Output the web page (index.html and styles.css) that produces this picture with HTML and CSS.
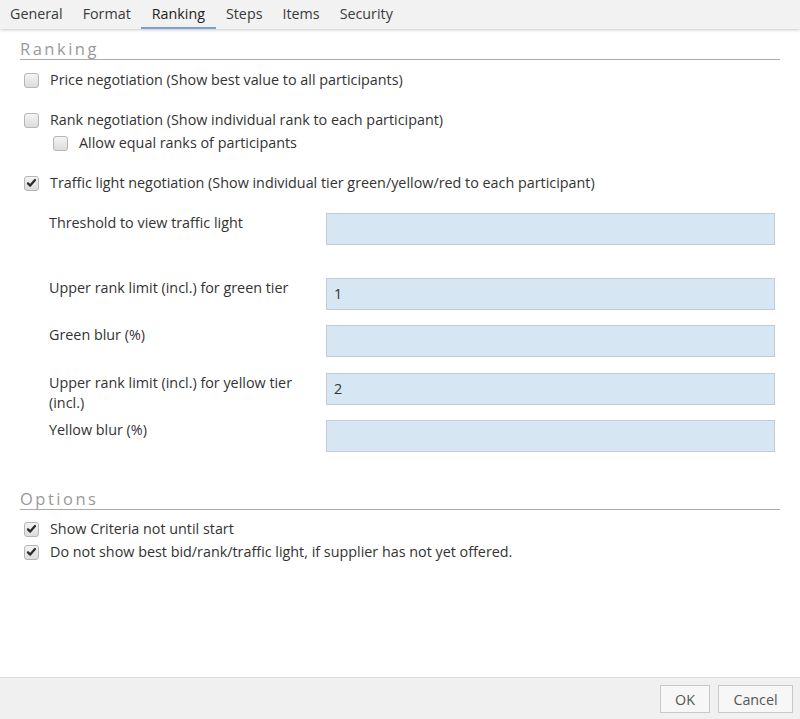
FILE: index.html
```html
<!DOCTYPE html>
<html>
<head>
<meta charset="utf-8">
<link rel="stylesheet" href="styles.css">
</head>
<body>
<div class="page">
  <nav class="tabs">
    <span class="tab">General</span>
    <span class="tab">Format</span>
    <span class="tab active">Ranking</span>
    <span class="tab">Steps</span>
    <span class="tab">Items</span>
    <span class="tab">Security</span>
  </nav>
  <main class="content">
    <h2 class="section">Ranking</h2>
    <label class="check first"><span class="box"></span>Price negotiation (Show best value to all participants)</label>
    <label class="check gap"><span class="box"></span>Rank negotiation (Show individual rank to each participant)</label>
    <label class="check sub tight"><span class="box"></span>Allow equal ranks of participants</label>
    <label class="check gap"><span class="box checked"><svg viewBox="0 0 14 14" width="14" height="14"><path d="M3.2 7.4 L5.6 9.8 L10.8 3.8" fill="none" stroke="#2b2b2b" stroke-width="2.4" stroke-linecap="round" stroke-linejoin="round"/></svg></span>Traffic light negotiation (Show individual tier green/yellow/red to each participant)</label>

    <div class="form">
      <div class="row wide"><div class="lbl">Threshold to view traffic light</div><div class="inp"></div></div>
      <div class="row"><div class="lbl">Upper rank limit (incl.) for green tier</div><div class="inp">1</div></div>
      <div class="row extra"><div class="lbl">Green blur (%)</div><div class="inp"></div></div>
      <div class="row"><div class="lbl">Upper rank limit (incl.) for yellow tier (incl.)</div><div class="inp">2</div></div>
      <div class="row"><div class="lbl">Yellow blur (%)</div><div class="inp"></div></div>
    </div>

    <h2 class="section opts">Options</h2>
    <label class="check opt1"><span class="box checked"><svg viewBox="0 0 14 14" width="14" height="14"><path d="M3.2 7.4 L5.6 9.8 L10.8 3.8" fill="none" stroke="#2b2b2b" stroke-width="2.4" stroke-linecap="round" stroke-linejoin="round"/></svg></span>Show Criteria not until start</label>
    <label class="check tight"><span class="box checked"><svg viewBox="0 0 14 14" width="14" height="14"><path d="M3.2 7.4 L5.6 9.8 L10.8 3.8" fill="none" stroke="#2b2b2b" stroke-width="2.4" stroke-linecap="round" stroke-linejoin="round"/></svg></span>Do not show best bid/rank/traffic light, if supplier has not yet offered.</label>
  </main>
  <footer class="footer">
    <button class="btn ok">OK</button>
    <button class="btn cancel">Cancel</button>
  </footer>
</div>
</body>
</html>
```
FILE: styles.css
```css
* { box-sizing: border-box; }
html, body { margin: 0; padding: 0; }
body {
  font-family: "Open Sans", "Liberation Sans", sans-serif;
  font-size: 14.35px;
  color: #333;
  background: #fff;
}
.page {
  display: flex;
  flex-direction: column;
  height: 719px;
}
.tabs {
  display: flex;
  height: 29px;
  background: #f2f2f2;
  box-shadow: 0 1px 3px rgba(0,0,0,0.22);
  position: relative;
  z-index: 1;
}
.tab {
  padding: 0 10px;
  font-size: 14.3px;
  line-height: 28px;
  color: #3a3a3a;
  border-bottom: 2px solid transparent;
  height: 29px;
}
.tab.active {
  color: #222;
  border-bottom: 2px solid #7a9fd2;
  padding: 0 11px;
}
.content {
  flex: 1;
  padding: 0 20px;
}
.section {
  margin: 9px 0 0 0;
  font-size: 16.5px;
  font-weight: normal;
  letter-spacing: 2.5px;
  color: #999;
  line-height: 21px;
  border-bottom: 1px solid #aaa;
}
.section.opts { margin-top: 36px; }
.check {
  display: flex;
  align-items: center;
  line-height: 20px;
  height: 20px;
  padding-left: 4px;
}
.check.first { margin-top: 10px; }
.check.gap { margin-top: 20px; }
.check.tight { margin-top: 3px; }
.check.sub { padding-left: 33px; }
.check.opt1 { margin-top: 9px; }
.box {
  width: 15px;
  height: 15px;
  flex: none;
  margin-right: 11px;
  border: 1px solid #b5b5b5;
  border-radius: 3px;
  background: linear-gradient(#f4f4f4, #dcdcdc);
  display: flex;
  align-items: center;
  justify-content: center;
}
.box svg { display: block; }
.form {
  margin-top: 20px;
  padding: 0 5px 0 29px;
  display: flex;
  flex-direction: column;
  gap: 15px;
}
.row {
  display: grid;
  grid-template-columns: 277px 1fr;
  height: 32px;
}
.row.wide { margin-bottom: 18px; }
.row.extra { margin-bottom: 1px; }
.lbl {
  line-height: 20px;
  padding-right: 20px;
  color: #333;
}
.inp {
  height: 32px;
  background: #d6e7f3;
  border: 1px solid #c3ccd4;
  padding: 0 7px;
  line-height: 30px;
  color: #333;
}
.footer {
  height: 42px;
  border-top: 1px solid #dcdcdc;
  background: #f0f0f0;
  display: flex;
  justify-content: flex-end;
  align-items: flex-start;
  gap: 8px;
  padding: 7px 7px 0 0;
}
.btn {
  font-family: "Open Sans", "Liberation Sans", sans-serif;
  font-size: 14.3px;
  color: #555;
  background: #f7f7f7;
  border: 1px solid #c8c8c8;
  height: 28px;
  padding: 0;
  margin: 0;
}
.btn.ok { width: 50px; }
.btn.cancel { width: 75px; }
```
